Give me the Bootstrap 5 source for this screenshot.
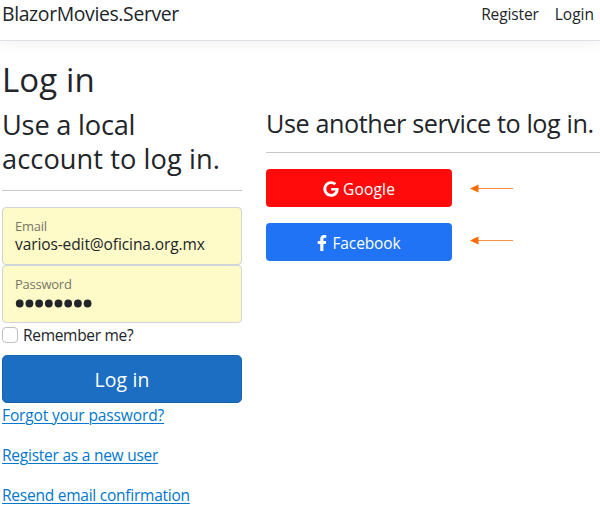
<!DOCTYPE html>
<html lang="en">
<head>
<meta charset="utf-8">
<meta name="viewport" content="width=device-width, initial-scale=1">
<title>Log in - BlazorMovies.Server</title>
<link href="https://cdn.jsdelivr.net/npm/bootstrap@5.3.0/dist/css/bootstrap.min.css" rel="stylesheet">
<style>
body{font-family:"Open Sans",sans-serif;font-size:15.5px;line-height:24px;color:#212529;overflow:hidden}
.site-bar{height:41px;border-bottom:1px solid #dee2e6;box-shadow:0 4px 12px rgba(0,0,0,.05);padding:0 6px 0 2px}
.site-name{font-size:19.4px;letter-spacing:-.36px;line-height:28px;color:#212529;text-decoration:none}
.site-links a{color:#212529;text-decoration:none;line-height:28px}
.page{padding-left:2px;width:602px}
.page-title{font-size:33px;line-height:41px;letter-spacing:.1px;margin:18px 0 8px}
.local{width:240px;flex:none}
.external{width:336px;flex:none}
.local-title{font-size:27.2px;line-height:34px;letter-spacing:.08px;margin:0 0 14px}
.local-title span{letter-spacing:-.2px}
.ext-title{font-size:25.2px;line-height:31px;letter-spacing:-.41px;margin:0}
.rule{border-top:1px solid #c5c6c7;opacity:1;margin:13px 0 16px}
.form-floating>.field{height:58px;min-height:58px;background:#fffbc8;border-color:#ced4da;border-radius:4px;font-size:15.5px;letter-spacing:-.1px;color:#212529;line-height:22px}
.form-floating>.field,.form-floating>.field:not(:placeholder-shown){padding:26px 12px 10px}
.form-floating>.field:focus{box-shadow:none;background:#fffbc8}
.form-floating>label.field-name{font-size:13px;letter-spacing:-.25px;line-height:18px;color:#76766a!important;opacity:1!important;transform:none!important;padding:9px 12px 0;height:auto}
.form-floating>label.field-name::after{display:none}
.dots{display:block}
.remember{height:24px;margin:0 0 8px;gap:5px;letter-spacing:-.3px}
.remember .form-check-input{width:16px;height:16px;margin:0;border-color:#bfbfbf;border-radius:4px;flex:none}
.login-btn{height:48px;background:#1b6ec2;border:1px solid #1861ac;border-radius:4.8px;color:#fff;font-size:19.4px;letter-spacing:.14px;padding:2px 0 0}
.help-links a{display:block;color:#0077cc;line-height:24px;margin-bottom:16px;text-underline-offset:2px;text-decoration-thickness:1px}
.provider{width:186px;height:38px;border:0;border-radius:4px;color:#fff;font-size:15.5px;padding:4px 0 0;margin-bottom:16px;gap:5px}
.provider svg{margin-bottom:2px}
.google{background:#ff0b0b;gap:4px}.facebook{background:#1f73f4}
.pointer{margin:0 0 16px 18px}
.pointer-high{margin-bottom:20px}
.ls-a{letter-spacing:-.12px}.ls-b{letter-spacing:-.24px}.ls-c{letter-spacing:.2px}
</style>
<script src="https://cdn.jsdelivr.net/npm/bootstrap@5.3.0/dist/js/bootstrap.bundle.min.js"></script>
</head>
<body class="bg-white">
<header class="site-bar d-flex justify-content-between">
  <a class="site-name" href="#">BlazorMovies.Server</a>
  <nav class="site-links d-flex gap-3"><a class="ls-a" href="#">Register</a><a href="#">Login</a></nav>
</header>
<main class="page">
  <h1 class="page-title fw-normal">Log in</h1>
  <div class="d-flex gap-4">
    <section class="local">
      <h2 class="local-title fw-normal"><span>Use a local</span><br>account to log in.</h2>
      <hr class="rule">
      <form>
        <div class="form-floating">
          <input class="form-control field" id="email" type="email" value="varios-edit@oficina.org.mx" placeholder="Email">
          <label class="field-name" for="email">Email</label>
        </div>
        <div class="form-floating">
          <div class="form-control field" id="password"><svg class="dots" width="80" height="20" fill="#212529" aria-label="Hidden password"><circle cx="4.7" cy="11.5" r="3.9"/><circle cx="14.4" cy="11.5" r="3.9"/><circle cx="24.1" cy="11.5" r="3.9"/><circle cx="33.8" cy="11.5" r="3.9"/><circle cx="43.5" cy="11.5" r="3.9"/><circle cx="53.2" cy="11.5" r="3.9"/><circle cx="62.9" cy="11.5" r="3.9"/><circle cx="72.6" cy="11.5" r="3.9"/></svg></div>
          <label class="field-name">Password</label>
        </div>
        <label class="remember d-flex align-items-center"><input class="form-check-input" type="checkbox">Remember me?</label>
        <button class="btn login-btn w-100 d-block" type="button">Log in</button>
      </form>
      <div class="help-links"><a href="#"><span class="ls-a">Forgot your password?</span></a><a class="ls-b" href="#">Register as a new user</a><a class="ls-b" href="#">Resend email confirmation</a></div>
    </section>
    <section class="external">
      <h3 class="ext-title fw-normal text-nowrap">Use another service to log in.</h3>
      <hr class="rule">
      <div class="d-flex align-items-center">
        <button class="btn provider google d-flex align-items-center justify-content-center ls-c" type="button"><svg width="16" height="16" viewBox="0 0 488 512" fill="#fff"><path d="M488 261.8C488 403.3 391.1 504 248 504 110.8 504 0 393.2 0 256S110.8 8 248 8c66.8 0 123 24.500 166.300 64.900l-67.500 64.900C258.500 52.600 94.300 116.600 94.300 256c0 86.500 69.100 156.600 153.700 156.600 98.200 0 135-70.400 140.800-106.900H248v-85.300h236.100c2.300 12.700 3.900 24.900 3.900 41.400z"/></svg>Google</button>
        <svg class="pointer" width="44" height="10"><path d="M8 5.500H43" stroke="#ff8f3f" stroke-width="1"/><path d="M0 5.500L8.500 1.500v8z" fill="#ff6a00"/></svg>
      </div>
      <div class="d-flex align-items-center">
        <button class="btn provider facebook d-flex align-items-center justify-content-center ls-a" type="button"><svg width="10" height="16" viewBox="0 0 320 512" fill="#fff"><path d="M279.140 288l14.220-92.660h-88.910v-60.130c0-25.350 12.420-50.060 52.240-50.060h40.420V6.260S260.430 0 225.360 0c-73.220 0-121.080 44.380-121.080 124.720v70.620H22.890V288h81.390v224h100.170V288z"/></svg>Facebook</button>
        <svg class="pointer pointer-high" width="44" height="10"><path d="M8 5.500H43" stroke="#ff8f3f" stroke-width="1"/><path d="M0 5.500L8.500 1.500v8z" fill="#ff6a00"/></svg>
      </div>
    </section>
  </div>
</main>
</body>
</html>
